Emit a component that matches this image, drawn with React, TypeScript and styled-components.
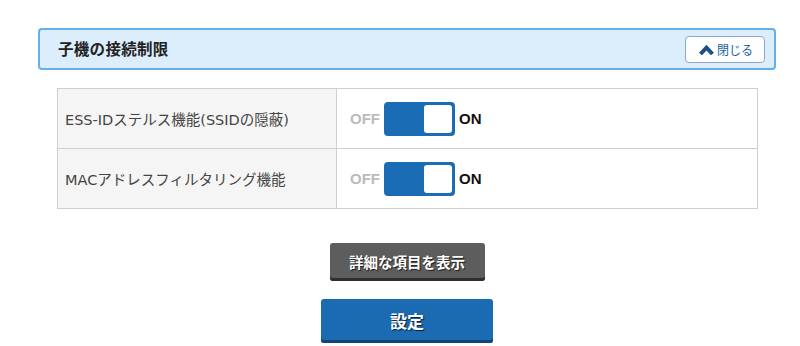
import React from "react";
import styled, { createGlobalStyle } from "styled-components";

const GlobalStyle = createGlobalStyle`
  body {
    margin: 0;
    background: #fff;
    font-family: "Noto Sans", "Noto Sans CJK JP", sans-serif;
  }
`;

const Page = styled.div`
  width: 738px;
  padding: 28px 0 0 38px;
`;

const SectionHeader = styled.div`
  height: 38px;
  border: 2px solid #63b0ee;
  border-radius: 4px;
  background: #dcedfc;
  display: flex;
  align-items: center;
  justify-content: space-between;
  padding: 0 9px 0 18px;
`;

const Title = styled.h2`
  margin: 0 0 1px;
  font-size: 15.5px;
  font-weight: bold;
  color: #222;
  letter-spacing: 0.3px;
`;

const CloseButton = styled.button`
  width: 80px;
  height: 27px;
  border: 1px solid #8aa9cc;
  border-radius: 4px;
  background: #fff;
  display: flex;
  align-items: center;
  justify-content: center;
  gap: 3px;
  padding: 0 0 0 2px;
  font-family: "Noto Sans CJK JP", sans-serif;
  font-size: 12px;
  color: #1d5fa5;
  cursor: pointer;
`;

const Table = styled.div`
  margin: 18px 18px 0 19px;
  border: 1px solid #cfcfcf;
`;

const Row = styled.div`
  display: flex;
  height: 59px;
  & + & {
    border-top: 1px solid #cfcfcf;
  }
`;

const LabelCell = styled.div`
  width: 271px;
  background: #f5f5f5;
  border-right: 1px solid #cfcfcf;
  display: flex;
  align-items: center;
  padding-left: 7px;
  font-family: "DejaVu Sans", "Noto Sans CJK JP", sans-serif;
  font-size: 14.5px;
  color: #444;
`;

const ValueCell = styled.div`
  flex: 1;
  display: flex;
  align-items: center;
  padding-left: 13px;
  gap: 4px;
`;

const StateText = styled.span<{ $active?: boolean }>`
  font-family: "Liberation Sans", Arial, sans-serif;
  font-size: 15px;
  font-weight: bold;
  color: ${(p) => (p.$active ? "#111" : "#bbb")};
`;

const Switch = styled.div`
  width: 65px;
  height: 28px;
  border: 2px solid #1a6cb4;
  border-radius: 4px;
  background: #1a6cb4;
  display: flex;
  justify-content: flex-end;
  padding: 1px;
  box-sizing: content-box;
`;

const Knob = styled.div`
  width: 28px;
  height: 28px;
  background: #fff;
  border-radius: 3px;
`;

const Actions = styled.div`
  display: flex;
  flex-direction: column;
  align-items: center;
  gap: 18px;
  margin-top: 34px;
`;

const ActionButton = styled.button<{ $primary?: boolean }>`
  width: ${(p) => (p.$primary ? "172px" : "155px")};
  height: ${(p) => (p.$primary ? "44px" : "38px")};
  border: none;
  border-radius: 3px;
  background: ${(p) => (p.$primary ? "#1a6bb2" : "#5d5d5d")};
  box-shadow: inset 0 -3px 0 ${(p) => (p.$primary ? "#0f467a" : "#2f2f2f")};
  color: #fff;
  font-family: "Noto Sans CJK JP", sans-serif;
  font-weight: bold;
  font-size: ${(p) => (p.$primary ? "17px" : "14.5px")};
  text-shadow: 1px 1px 1px rgba(0, 0, 0, 0.7);
  padding: 0 0 2px;
  cursor: pointer;
`;

const ChevronUp = () => (
  <svg width="15" height="11" viewBox="0 0 15 11">
    <path d="M1.5 10 L7.5 3.6 L13.5 10" fill="none" stroke="#1d4f88" strokeWidth="4" strokeLinejoin="miter" />
  </svg>
);

const rows = ["ESS-IDステルス機能(SSIDの隠蔽)", "MACアドレスフィルタリング機能"];

const App = () => (
  <>
    <GlobalStyle />
    <Page>
      <SectionHeader>
        <Title>子機の接続制限</Title>
        <CloseButton>
          <ChevronUp />
          閉じる
        </CloseButton>
      </SectionHeader>
      <Table>
        {rows.map((label) => (
          <Row key={label}>
            <LabelCell>{label}</LabelCell>
            <ValueCell>
              <StateText>OFF</StateText>
              <Switch>
                <Knob />
              </Switch>
              <StateText $active>ON</StateText>
            </ValueCell>
          </Row>
        ))}
      </Table>
      <Actions>
        <ActionButton>詳細な項目を表示</ActionButton>
        <ActionButton $primary>設定</ActionButton>
      </Actions>
    </Page>
  </>
);

export default App;
